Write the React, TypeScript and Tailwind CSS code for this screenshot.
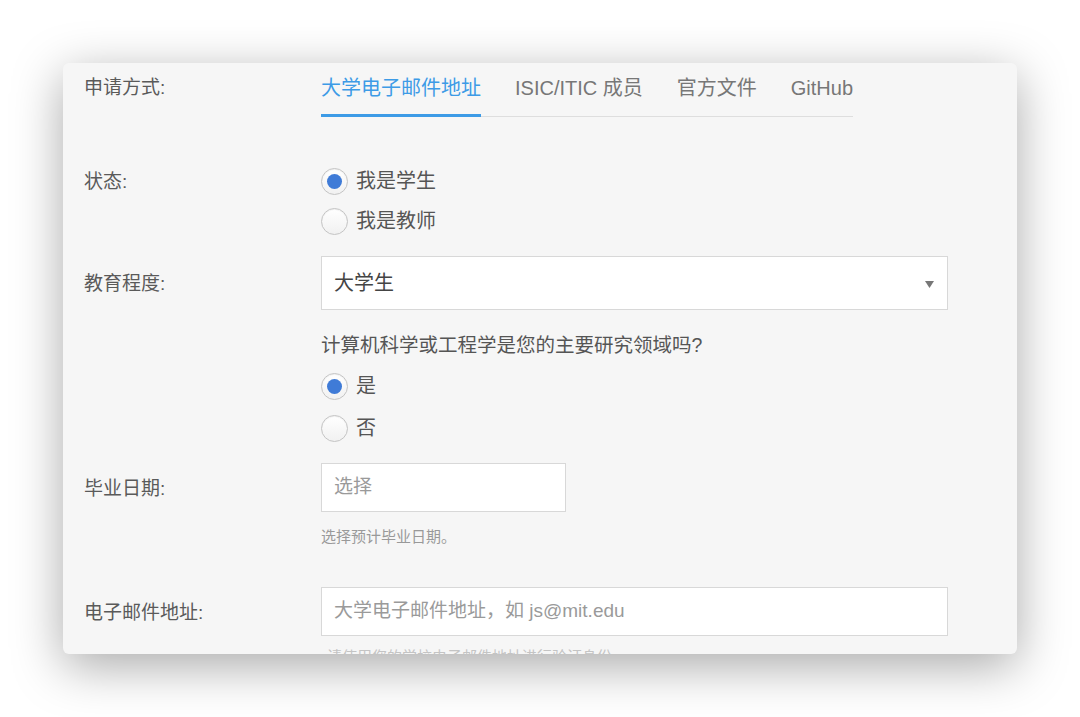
import React from "react";

const font = { fontFamily: '"Liberation Sans", "Noto Sans CJK SC", sans-serif' };

function Radio({ checked, label }: { checked?: boolean; label: string }) {
  return (
    <div className="flex items-center gap-[8px]">
      <div className="w-[27px] h-[27px] rounded-full border border-[#c4c4c4] bg-gradient-to-b from-[#ffffff] to-[#f1f1f1] shadow-[inset_0_1px_1px_rgba(0,0,0,0.06)] flex items-center justify-center">
        {checked && <div className="w-[15px] h-[15px] rounded-full bg-[#3f7bd7]" />}
      </div>
      <span className="text-[20px] text-[#555]">{label}</span>
    </div>
  );
}

function Label({ text, h }: { text: string; h: string }) {
  return (
    <div className={`w-[237px] shrink-0 flex items-center pt-[3px] text-[19px] text-[#5a5a5a] ${h}`}>{text}</div>
  );
}

export default function App() {
  const tabs = ["大学电子邮件地址", "ISIC/ITIC 成员", "官方文件", "GitHub"];
  return (
    <div className="w-[1080px] h-[717px] bg-white overflow-hidden pt-[63px] pl-[63px]" style={font}>
      <div className="w-[954px] h-[591px] bg-[#f6f6f6] rounded-[6px] overflow-hidden shadow-[0_12px_50px_rgba(0,0,0,0.34)] pl-[21px]">
        {/* tabs row */}
        <div className="flex">
          <div className="w-[237px] shrink-0 pt-[11px] leading-[28px] text-[19px] text-[#5a5a5a]">申请方式:</div>
          <div className="flex gap-[34px] border-b border-[#dedede] w-fit">
            {tabs.map((t, i) => (
              <div
                key={t}
                className={`pt-[11px] pb-[12px] leading-[28px] text-[20px] -mb-px border-b-[3px] ${
                  i === 0 ? "text-[#3d9be6] border-[#3d9be6]" : "text-[#777] border-transparent"
                }`}
              >
                {t}
              </div>
            ))}
          </div>
        </div>

        {/* status */}
        <div className="flex mt-[44px]">
          <Label text="状态:" h="h-[40px]" />
          <div className="flex flex-col">
            <div className="h-[40px] flex items-center">
              <Radio checked label="我是学生" />
            </div>
            <div className="h-[40px] flex items-center">
              <Radio label="我是教师" />
            </div>
          </div>
        </div>

        {/* education */}
        <div className="flex mt-[15px]">
          <Label text="教育程度:" h="h-[54px]" />
          <div className="w-[627px] h-[54px] bg-white border border-[#d8d8d8] flex items-center justify-between pl-[12px] pr-[13px]">
            <span className="text-[20px] text-[#444]">大学生</span>
            <svg width="9" height="7" viewBox="0 0 9 7" className="mt-[3px]">
              <path d="M0 0 L9 0 L4.5 7 Z" fill="#777" />
            </svg>
          </div>
        </div>

        {/* question */}
        <div className="flex mt-[21px]">
          <div className="w-[237px] shrink-0" />
          <div className="flex flex-col">
            <div className="leading-[28px] text-[19.5px] text-[#555]">计算机科学或工程学是您的主要研究领域吗?</div>
            <div className="mt-[6px] h-[42px] flex items-center">
              <Radio checked label="是" />
            </div>
            <div className="h-[42px] flex items-center">
              <Radio label="否" />
            </div>
          </div>
        </div>

        {/* graduation date */}
        <div className="flex mt-[14px]">
          <Label text="毕业日期:" h="h-[49px]" />
          <div className="flex flex-col">
            <div className="w-[245px] h-[49px] bg-white border border-[#d8d8d8] flex items-center pl-[12px]">
              <span className="text-[19px] text-[#9a9a9a]">选择</span>
            </div>
            <div className="mt-[14px] leading-[22px] text-[15px] text-[#999]">选择预计毕业日期。</div>
          </div>
        </div>

        {/* email */}
        <div className="flex mt-[39px]">
          <Label text="电子邮件地址:" h="h-[49px]" />
          <div className="flex flex-col">
            <div className="w-[627px] h-[49px] bg-white border border-[#d8d8d8] flex items-center pl-[12px]">
              <span className="text-[19px] text-[#9a9a9a]">大学电子邮件地址，如 js@mit.edu</span>
            </div>
            <div className="mt-[10px] pl-[6px] leading-[22px] text-[15px] text-[#c4c4c4]">请使用您的学校电子邮件地址进行验证身份。</div>
          </div>
        </div>
      </div>
    </div>
  );
}
